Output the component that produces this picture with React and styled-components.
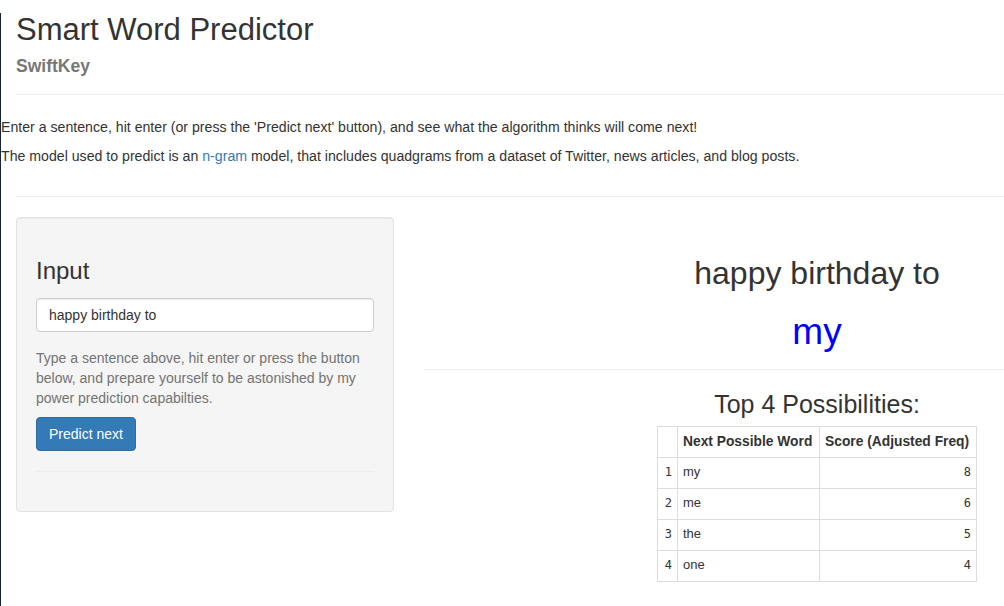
import React from "react";
import styled, { createGlobalStyle } from "styled-components";

const GlobalStyle = createGlobalStyle`
  html, body {
    margin: 0;
    padding: 0;
    background: white;
    overflow: hidden;
  }
  body {
    font-family: "Liberation Sans", Arial, sans-serif;
    font-size: 14px;
    line-height: 1.42857;
    color: #333;
  }
`;

const Page = styled.div`
  width: 1226px;
  min-height: 606px;
  border-left: 1px solid #142638;
  box-sizing: border-box;
`;

const Container = styled.div`
  padding: 0 15px;
`;

const Title = styled.h2`
  margin: 13px 0 0;
  font-size: 31px;
  font-weight: 500;
  line-height: 1.1;
`;

const Subtitle = styled.h4`
  margin: 10px 0 0;
  font-size: 17.5px;
  font-weight: bold;
  line-height: 1.1;
  color: #777;
`;

const Rule = styled.hr`
  margin: ${(props) => props.margin || "20px 0"};
  border: 0;
  border-top: 1px solid #eee;
`;

const Intro = styled.p`
  margin: 0 0 10px;
  font-size: 14.15px;
  line-height: 19px;
`;

const Link = styled.a`
  color: #337ab7;
  text-decoration: none;
`;

const Row = styled.div`
  display: grid;
  grid-template-columns: 408px 816px;
  margin: 0 -15px;
`;

const Col = styled.div`
  padding: 0 15px;
  min-width: 0;
`;

const Well = styled.div`
  background: #f5f5f5;
  border: 1px solid #e3e3e3;
  border-radius: 4px;
  padding: 19px 19px 20px;
  box-shadow: inset 0 1px 1px rgba(0, 0, 0, 0.05);
`;

const PanelHeading = styled.h3`
  margin: 21px 0 13px;
  font-size: 24px;
  font-weight: 500;
  line-height: 1.1;
`;

const TextInput = styled.input`
  display: block;
  width: 100%;
  height: 34px;
  box-sizing: border-box;
  padding: 6px 12px;
  font-family: inherit;
  font-size: 14px;
  color: #333;
  background: white;
  border: 1px solid #ccc;
  border-radius: 4px;
  box-shadow: inset 0 1px 1px rgba(0, 0, 0, 0.075);
  outline: none;
`;

const HelpText = styled.p`
  margin: 17px 0 8px;
  color: #737373;
`;

const PrimaryButton = styled.button`
  display: block;
  height: 34px;
  padding: 6px 12px;
  font-family: inherit;
  font-size: 14px;
  color: white;
  background: #337ab7;
  border: 1px solid #2e6da4;
  border-radius: 4px;
`;

const Output = styled.div`
  text-align: center;
`;

const Sentence = styled.h2`
  margin: 39px 0 0;
  font-size: 32px;
  font-weight: 500;
  line-height: 1.1;
`;

const Prediction = styled.h1`
  margin: 20px 0 0;
  font-size: 37px;
  font-weight: 500;
  line-height: 1.1;
  color: #0000ff;
`;

const TableTitle = styled.h3`
  margin: 0 0 7px;
  font-size: 25px;
  font-weight: 500;
  line-height: 1.1;
`;

const Table = styled.table`
  margin: 0 auto;
  border-collapse: collapse;
  font-size: 13px;
  text-align: left;
`;

const Cell = styled.td`
  height: 31px;
  box-sizing: border-box;
  padding: 0 5px;
  border: 1px solid #ddd;
  width: ${(props) => props.width || "auto"};
  text-align: ${(props) => props.align || "left"};
  font-family: ${(props) =>
    props.mono ? '"DejaVu Sans Mono", monospace' : "inherit"};
  font-size: ${(props) =>
    props.mono ? "12px" : props.head ? "13.8px" : "13px"};
  font-weight: ${(props) => (props.head ? "bold" : "normal")};
`;

const rows = [
  { n: 1, word: "my", score: 8 },
  { n: 2, word: "me", score: 6 },
  { n: 3, word: "the", score: 5 },
  { n: 4, word: "one", score: 4 },
];

const App = () => {
  return (
    <Page>
      <GlobalStyle />
      <Container>
        <Title>Smart Word Predictor</Title>
        <Subtitle>SwiftKey</Subtitle>
        <Rule margin="18px 0 23px" />
      </Container>
      <Intro>
        Enter a sentence, hit enter (or press the 'Predict next' button), and
        see what the algorithm thinks will come next!
      </Intro>
      <Intro>
        The model used to predict is an <Link href="#">n-gram</Link> model,
        that includes quadgrams from a dataset of Twitter, news articles, and
        blog posts.
      </Intro>
      <Container>
        <Rule margin="30px 0 20px" />
        <Row>
          <Col>
            <Well>
              <PanelHeading>Input</PanelHeading>
              <TextInput defaultValue="happy birthday to" />
              <HelpText>
                Type a sentence above, hit enter or press the button below, and
                prepare yourself to be astonished by my power prediction
                capabilties.
              </HelpText>
              <PrimaryButton>Predict next</PrimaryButton>
              <Rule margin="20px 0 19px" />
            </Well>
          </Col>
          <Col>
            <Output>
              <Sentence>happy birthday to</Sentence>
              <Prediction>my</Prediction>
              <Rule margin="17px 0 21px" />
              <TableTitle>Top 4 Possibilities:</TableTitle>
              <Table>
                <tbody>
                  <tr>
                    <Cell width="20px" />
                    <Cell width="142px" head>
                      Next Possible Word
                    </Cell>
                    <Cell width="157px" head>
                      Score (Adjusted Freq)
                    </Cell>
                  </tr>
                  {rows.map((r) => (
                    <tr key={r.n}>
                      <Cell mono align="right">
                        {r.n}
                      </Cell>
                      <Cell>{r.word}</Cell>
                      <Cell mono align="right">
                        {r.score}
                      </Cell>
                    </tr>
                  ))}
                </tbody>
              </Table>
            </Output>
          </Col>
        </Row>
      </Container>
    </Page>
  );
};

export default App;
